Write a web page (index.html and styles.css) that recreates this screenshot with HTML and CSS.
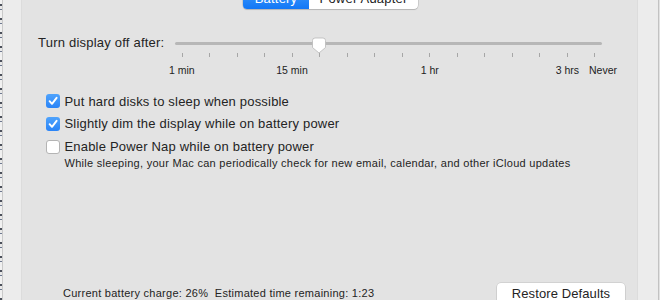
FILE: index.html
```html
<!DOCTYPE html>
<html>
<head>
<meta charset="utf-8">
<link rel="stylesheet" href="styles.css">
</head>
<body>
<div class="screen">
  <div class="behind"></div>
  <div class="window">
    <div class="panel">
      <div class="seg">
        <div class="seg-item seg-on">Battery</div>
        <div class="seg-item">Power Adapter</div>
      </div>

      <div class="slider-row">
        <div class="slider-label">Turn display off after:</div>
        <div class="slider">
          <div class="track"></div>
          <svg class="thumb" width="16" height="17" viewBox="0 0 16 17">
            <path d="M1.5 3.5 Q1.5 1 4 1 H12 Q14.5 1 14.5 3.5 V10.5 L8 16 L1.5 10.5 Z" fill="#ffffff" stroke="#b9b9b9" stroke-width="0.8"/>
          </svg>
        </div>
      </div>

      <div class="ticks">
        <span></span><span></span><span></span><span></span><span></span><span></span><span></span><span></span>
        <span></span><span></span><span></span><span></span><span></span><span></span><span></span><span></span>
      </div>

      <div class="scale">
        <span class="c1">1 min</span>
        <span class="c5">15 min</span>
        <span class="c10">1 hr</span>
        <span class="c15">3 hrs</span>
        <span class="c16">Never</span>
      </div>

      <div class="checks">
        <div class="check-row">
          <span class="box box-on"><svg width="14" height="14" viewBox="0 0 14 14"><path d="M3.6 7.2 L6 9.8 L10.6 3.8" fill="none" stroke="#fff" stroke-width="1.9" stroke-linecap="round" stroke-linejoin="round"/></svg></span>
          <span class="check-text">Put hard disks to sleep when possible</span>
        </div>
        <div class="check-row">
          <span class="box box-on"><svg width="14" height="14" viewBox="0 0 14 14"><path d="M3.6 7.2 L6 9.8 L10.6 3.8" fill="none" stroke="#fff" stroke-width="1.9" stroke-linecap="round" stroke-linejoin="round"/></svg></span>
          <span class="check-text">Slightly dim the display while on battery power</span>
        </div>
        <div class="check-row">
          <span class="box"></span>
          <span class="check-text">Enable Power Nap while on battery power</span>
        </div>
        <div class="subtext">While sleeping, your Mac can periodically check for new email, calendar, and other iCloud updates</div>
      </div>

      <div class="footer">
        <div class="status">Current battery charge: 26%&nbsp; Estimated time remaining: 1:23</div>
        <div class="button">Restore Defaults</div>
      </div>
    </div>
    <div class="side"></div>
  </div>
  <div class="edge"></div>
</div>
</body>
</html>
```

FILE: styles.css
```css
html, body {
  margin: 0;
  padding: 0;
  width: 660px;
  height: 300px;
  overflow: hidden;
  background: #ececec;
  font-family: "Liberation Sans", Arial, sans-serif;
  color: #242424;
}

.screen {
  display: flex;
  width: 660px;
  height: 300px;
  overflow: hidden;
}

.behind {
  width: 2px;
  flex: none;
  background: repeating-linear-gradient(to bottom, #f2f2f2 0px, #f2f2f2 4px, #4a4f5a 4px, #4a4f5a 6px, #e8e8e8 6px, #e8e8e8 9px, #6d7890 9px, #6d7890 10px, #f0f0f0 10px, #f0f0f0 14px);
  border-right: 1px solid #c9c9c9;
}

.window {
  flex: none;
  width: 655px;
  display: flex;
  background: #ececec;
  padding-left: 18px;
  box-sizing: border-box;
}

.panel {
  width: 617px;
  flex: none;
  height: 340px;
  background: #e3e3e3;
  border-left: 1px solid #dcdcdc;
  border-right: 1px solid #dcdcdc;
  box-sizing: border-box;
  padding-left: 16px;
}

.side {
  flex: 1;
}

.edge {
  flex: none;
  width: 2px;
  background: linear-gradient(to right, #c2c2c2 0px, #c2c2c2 1px, #e2e2e2 1px);
}

/* segmented control */
.seg {
  display: flex;
  margin-left: 205px;
  margin-top: -11px;
  height: 20px;
  width: 175px;
  border-radius: 4px;
  box-shadow: 0 0 0 0.5px rgba(0,0,0,0.18), 0 1px 1px rgba(0,0,0,0.12);
  overflow: hidden;
  background: #fff;
  font-size: 13px;
  line-height: 20px;
  white-space: nowrap;
  letter-spacing: 0.2px;
}

.seg-item {
  text-align: center;
  color: #222;
  flex: 1;
}

.seg-on {
  flex: none;
  width: 66px;
  background: linear-gradient(to bottom, #3f9bfc, #1277f6);
  color: #fff;
}

/* slider */
.slider-row {
  display: flex;
  align-items: flex-start;
  margin-top: 26px;
  height: 16px;
}

.slider-label {
  width: 137px;
  flex: none;
  font-size: 13px;
  line-height: 16px;
  letter-spacing: 0.22px;
  white-space: nowrap;
}

.slider {
  position: relative;
  width: 427px;
  height: 16px;
}

.track {
  margin-top: 7px;
  height: 2.5px;
  border-radius: 2px;
  background: #b7b7b7;
}

.thumb {
  position: absolute;
  left: 136px;
  top: 1.5px;
}

.ticks {
  display: flex;
  justify-content: space-between;
  margin-left: 143.5px;
  width: 414px;
  margin-top: 2px;
  height: 4px;
}

.ticks span {
  width: 1px;
  height: 4px;
  background: #a6a6a6;
}

.scale {
  display: grid;
  grid-template-columns: repeat(16, 27.55px);
  margin-left: 130px;
  margin-top: 6.5px;
  height: 13px;
  font-size: 10.5px;
  line-height: 13px;
  color: #222;
}

.scale span {
  justify-self: center;
  white-space: nowrap;
}

.c1 { grid-column: 1; }
.c5 { grid-column: 5; }
.c10 { grid-column: 10; }
.c15 { grid-column: 15; }
.c16 { grid-column: 16; margin-left: 16px; }

/* checkboxes */
.checks {
  margin-top: 13.3px;
  margin-left: 8px;
}

.check-row {
  display: flex;
  align-items: center;
  height: 22.7px;
}

.box {
  width: 14px;
  height: 14px;
  flex: none;
  box-sizing: border-box;
  border-radius: 3px;
  background: #fff;
  border: 1px solid #b4b4b4;
  display: flex;
}

.box-on {
  border: none;
  background: linear-gradient(to bottom, #4fa3fc, #2a84f7);
}

.check-text {
  margin-left: 4.5px;
  font-size: 13px;
  letter-spacing: 0.19px;
  white-space: nowrap;
}

.subtext {
  margin-left: 18.5px;
  font-size: 11px;
  line-height: 13px;
  margin-top: -0.5px;
  letter-spacing: 0.28px;
  white-space: nowrap;
}

/* footer */
.footer {
  display: flex;
  align-items: center;
  justify-content: space-between;
  margin-top: 112.5px;
  margin-left: 25px;
  margin-right: 12px;
  height: 22px;
}

.status {
  font-size: 11px;
  line-height: 13px;
  letter-spacing: 0.26px;
  white-space: nowrap;
}

.button {
  width: 128px;
  height: 22px;
  box-sizing: border-box;
  background: #fff;
  border-radius: 4px;
  box-shadow: 0 0 0 0.5px rgba(0,0,0,0.15), 0 1px 1px rgba(0,0,0,0.15);
  font-size: 13px;
  line-height: 21px;
  letter-spacing: 0.1px;
  text-align: center;
  white-space: nowrap;
}
```
